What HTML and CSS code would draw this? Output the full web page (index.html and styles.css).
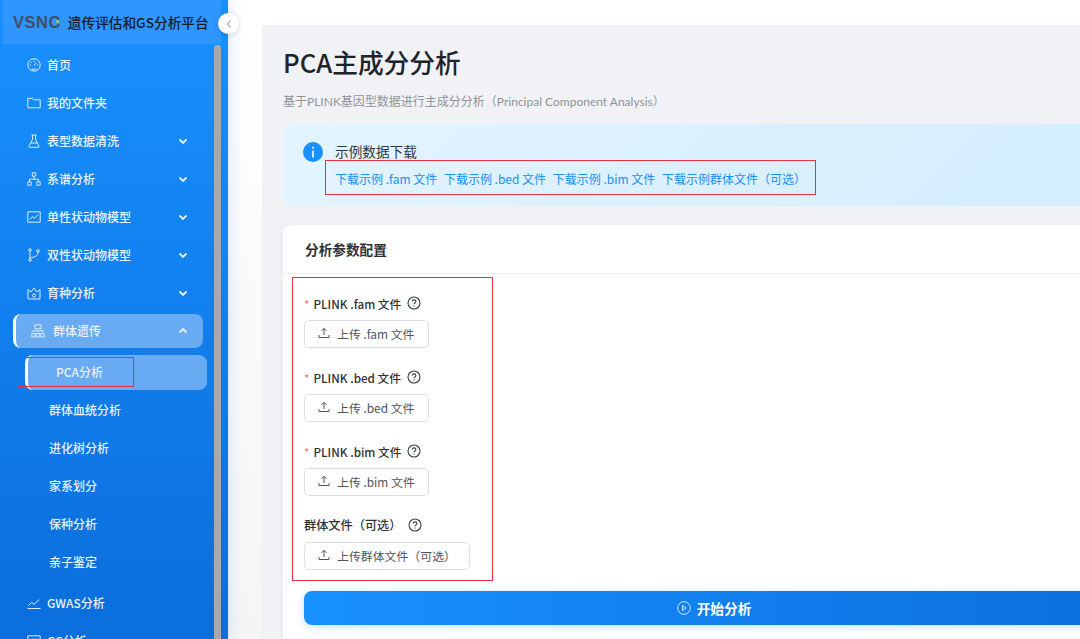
FILE: index.html
```html
<!DOCTYPE html>
<html lang="zh-CN">
<head>
<meta charset="utf-8">
<title>PCA主成分分析</title>
<link rel="stylesheet" href="styles.css">
</head>
<body>
<div class="app">
  <aside class="sidebar">
    <div class="brand"><span class="logo">VSNC</span><span class="brand-name">遗传评估和GS分析平台</span></div>
    <button class="collapse"><svg width="8" height="10" viewBox="0 0 8 10"><path d="M5.500 1.500 2.500 5l3 3.500" fill="none" stroke="#b4b8bf" stroke-width="1.400"/></svg></button>
    <div class="side-body">
      <nav class="menu">
        <a class="item"><svg class="ico" viewBox="0 0 14 14"><circle cx="7" cy="7" r="6.200"/><path d="M7 7.500 9.500 4.500M2.800 7h1.200M10 7h1.200M7 2.800V4M4 4l.8.8M4.500 11.200h5"/></svg><span>首页</span></a>
        <a class="item"><svg class="ico" viewBox="0 0 14 14"><path d="M.8 2.300h4.700l1.200 1.500h6.500v8H.8z"/></svg><span>我的文件夹</span></a>
        <a class="item"><svg class="ico" viewBox="0 0 14 14"><path d="M4.500 1h5M5.500 1v4.500L1.800 12.500c-.2.400 0 .8.500.8h9.400c.5 0 .7-.4.500-.8L8.500 5.500V1M3.500 9h7"/></svg><span>表型数据清洗</span><svg class="chev" viewBox="0 0 10 10"><path d="M1.500 3.500 5 7l3.500-3.500"/></svg></a>
        <a class="item"><svg class="ico" viewBox="0 0 14 14"><path d="M5.300.8h3.400v3.400H5.300zM.8 9.800h3.400v3.400H.8zM9.800 9.800h3.400v3.400H9.800zM7 4.200v3M2.500 9.800V7.200h9v2.600"/></svg><span>系谱分析</span><svg class="chev" viewBox="0 0 10 10"><path d="M1.500 3.500 5 7l3.500-3.500"/></svg></a>
        <a class="item"><svg class="ico" viewBox="0 0 14 14"><path d="M.8 1.800h12.400v10.400H.8zM3 9.500l2.500-2.800 2 1.500L11 4.800"/></svg><span>单性状动物模型</span><svg class="chev" viewBox="0 0 10 10"><path d="M1.500 3.500 5 7l3.500-3.500"/></svg></a>
        <a class="item"><svg class="ico" viewBox="0 0 14 14"><circle cx="3" cy="2" r="1.300"/><circle cx="3" cy="12" r="1.300"/><circle cx="11" cy="3" r="1.300"/><path d="M3 3.300v7.400M3 9.500c5 0 8-1.500 8-5.200"/></svg><span>双性状动物模型</span><svg class="chev" viewBox="0 0 10 10"><path d="M1.500 3.500 5 7l3.500-3.500"/></svg></a>
        <a class="item"><svg class="ico" viewBox="0 0 14 14"><path d="M1 3.500 4 6l3-4 3 4 3-2.500V13H1zM5.500 9.500a1.500 1.500 0 1 0 3 0 1.500 1.500 0 1 0-3 0"/></svg><span>育种分析</span><svg class="chev" viewBox="0 0 10 10"><path d="M1.500 3.500 5 7l3.500-3.500"/></svg></a>
        <a class="item group"><svg class="ico" viewBox="0 0 14 14"><path d="M3.800.8h6.400v4H3.800zM.8 9.500h3.400v3.500H.8zM5.300 9.500h3.400v3.500H5.300zM9.800 9.500h3.400v3.500H9.800zM.8 7h12.400"/></svg><span>群体遗传</span><svg class="chev" viewBox="0 0 10 10"><path d="M1.500 6.500 5 3l3.500 3.500"/></svg></a>
        <a class="sub active">PCA分析</a>
        <a class="sub">群体血统分析</a>
        <a class="sub">进化树分析</a>
        <a class="sub">家系划分</a>
        <a class="sub">保种分析</a>
        <a class="sub">亲子鉴定</a>
        <a class="item after-sub"><svg class="ico" viewBox="0 0 14 14"><path d="M.5 12.500h13M1 9.800l3.800-3.300 2.400 1.800 5-4.800"/></svg><span>GWAS分析</span></a>
        <a class="item"><svg class="ico" viewBox="0 0 14 14"><path d="M.8 1.800h12.400v10.400H.8zM3 4.500v2M5.500 4.500v2M8 4.500v2M10.500 4.500v2"/></svg><span>GS分析</span><svg class="chev" viewBox="0 0 10 10"><path d="M1.500 3.500 5 7l3.500-3.500"/></svg></a>
      </nav>
      <div class="thumb"></div>
    </div>
  </aside>
  <main class="main">
    <section class="panel">
      <h1 class="title">PCA主成分分析</h1>
      <p class="subtitle">基于PLINK基因型数据进行主成分分析（Principal Component Analysis）</p>
      <div class="alert">
        <svg class="info" viewBox="0 0 20 20"><circle cx="10" cy="10" r="10" fill="#1890ff"/><rect x="9.200" y="8.500" width="1.600" height="7" fill="#fff"/><rect x="9.200" y="4.800" width="1.600" height="1.800" fill="#fff"/></svg>
        <div class="alert-body">
          <div class="alert-title">示例数据下载</div>
          <div class="links"><a>下载示例 .fam 文件</a><a>下载示例 .bed 文件</a><a>下载示例 .bim 文件</a><a>下载示例群体文件（可选）</a></div>
        </div>
      </div>
      <div class="card">
        <div class="card-head">分析参数配置</div>
        <div class="card-body">
          <div class="field">
            <div class="label"><i>*</i>PLINK .fam 文件<svg class="help" viewBox="0 0 14 14"><circle cx="7" cy="7" r="6"/><path d="M5.200 5.600c0-2.300 3.700-2.300 3.700 0 0 1.400-1.900 1.400-1.900 2.700M7 9.600v1"/></svg></div>
            <button class="upload"><svg class="up" viewBox="0 0 12 12"><path d="M6 8V1.500M3.500 3.800 6 1.300l2.500 2.500M1 8v2.500h10V8"/></svg>上传 .fam 文件</button>
          </div>
          <div class="field">
            <div class="label"><i>*</i>PLINK .bed 文件<svg class="help" viewBox="0 0 14 14"><circle cx="7" cy="7" r="6"/><path d="M5.200 5.600c0-2.300 3.700-2.300 3.700 0 0 1.400-1.900 1.400-1.900 2.700M7 9.600v1"/></svg></div>
            <button class="upload"><svg class="up" viewBox="0 0 12 12"><path d="M6 8V1.500M3.500 3.800 6 1.300l2.500 2.500M1 8v2.500h10V8"/></svg>上传 .bed 文件</button>
          </div>
          <div class="field">
            <div class="label"><i>*</i>PLINK .bim 文件<svg class="help" viewBox="0 0 14 14"><circle cx="7" cy="7" r="6"/><path d="M5.200 5.600c0-2.300 3.700-2.300 3.700 0 0 1.400-1.900 1.400-1.900 2.700M7 9.600v1"/></svg></div>
            <button class="upload"><svg class="up" viewBox="0 0 12 12"><path d="M6 8V1.500M3.500 3.800 6 1.300l2.500 2.500M1 8v2.500h10V8"/></svg>上传 .bim 文件</button>
          </div>
          <div class="field">
            <div class="label plain">群体文件（可选）<svg class="help" viewBox="0 0 14 14"><circle cx="7" cy="7" r="6"/><path d="M5.200 5.600c0-2.300 3.700-2.300 3.700 0 0 1.400-1.900 1.400-1.900 2.700M7 9.600v1"/></svg></div>
            <button class="upload"><svg class="up" viewBox="0 0 12 12"><path d="M6 8V1.500M3.500 3.800 6 1.300l2.500 2.500M1 8v2.500h10V8"/></svg>上传群体文件（可选）</button>
          </div>
          <button class="start"><svg class="play" viewBox="0 0 14 14"><circle cx="7" cy="7" r="6.300"/><path d="M5.600 4.600 9.200 7l-3.600 2.400z"/></svg>开始分析</button>
        </div>
      </div>
    </section>
  </main>
</div>
<div class="mark mark-menu"></div>
<div class="mark mark-links"></div>
<div class="mark mark-form"></div>
</body>
</html>
```
FILE: styles.css
```css
* { box-sizing: border-box; }
html, body { margin: 0; height: 100%; overflow: hidden; }
body { font-family: "Noto Sans CJK SC", "Noto Sans", sans-serif; background: #fff; color: #303133; }
a { display: block; }
button { font-family: inherit; }

.app { display: flex; height: 639px; width: 1080px; overflow: hidden; }

.sidebar { position: relative; z-index: 2; flex: 0 0 228px; height: 100%; padding-left: 3px; padding-right: 7px; display: flex; flex-direction: column; background: linear-gradient(180deg, #1890ff 0%, #0a6edb 100%); box-shadow: 3px 0 12px rgba(24,120,230,.14); }
.brand { flex: 0 0 44px; display: flex; align-items: center; gap: 7px; padding-left: 10px; background: #2f95ff; white-space: nowrap; }
.logo { position: relative; font-family: "Liberation Sans", sans-serif; font-weight: 700; font-size: 16.500px; color: #3f4f66; letter-spacing: .5px; }
.logo::after { content: ""; position: absolute; right: 2px; top: 7px; width: 3px; height: 3px; border-radius: 50%; background: #b5d334; }
.brand-name { font-size: 13.670px; font-weight: 500; color: #14202e; }
.collapse { position: absolute; left: 218px; top: 13px; width: 21px; height: 21px; padding: 0; border: 0; border-radius: 50%; background: #fff; box-shadow: 0 1px 5px rgba(0,0,0,.15); display: flex; align-items: center; justify-content: center; }

.side-body { flex: 1; min-height: 0; display: flex; }
.menu { flex: 1; min-width: 0; padding-top: 2px; overflow: hidden; }
.thumb { flex: 0 0 7px; margin-top: 1px; border-radius: 3px 3px 0 0; background: #a9a9a9; }

.item { position: relative; height: 38px; display: flex; align-items: center; padding: 0 0 1px 24px; font-size: 12px; font-weight: 500; color: #eaf4ff; }
.ico { width: 14px; height: 14px; margin-right: 6px; flex: none; fill: none; stroke: #dcecff; stroke-width: 1; }
.chev { position: absolute; left: 175px; top: 14px; width: 10px; height: 10px; fill: none; stroke: #e6f2ff; stroke-width: 1.800; }
.after-sub { margin-top: 3px; }

.group { width: 190px; height: 34px; margin: 2px 0 0 10px; padding-left: 15px; border-radius: 8px; border-left: 3px solid #fff; background: #68abf2; }
.group .ico { margin-right: 8px; }
.group .chev { left: 162px; top: 12px; }

.sub { height: 38px; line-height: 38px; padding-left: 46px; font-size: 12px; font-weight: 500; color: #e6f2ff; }
.sub.active { width: 182px; height: 35px; line-height: 34px; margin: 7px 0 1px 22px; padding-left: 28px; border-radius: 8px; border-left: 3px solid #fff; background: #68abf2; }

.main { flex: 1; min-width: 0; padding: 25px 0 0 34px; background: linear-gradient(180deg, #fff 0%, #f5f5f5 100%); }
.panel { height: 100%; padding: 18px 0 0 21px; background: #f0f2f5; }
.title { margin: 0; font-size: 25.700px; line-height: 38px; font-weight: 500; color: #1f2329; white-space: nowrap; }
.subtitle { margin: 12px 0 0; font-family: "Lato", "Noto Sans CJK SC", sans-serif; font-size: 12px; line-height: 18px; color: #909399; white-space: nowrap; }

.alert { display: flex; height: 82px; margin-top: 13px; padding: 18px 0 0 20px; border-radius: 8px 0 0 8px; background: linear-gradient(135deg, #e3f4ff 0%, #d3edfe 100%); }
.info { width: 20px; height: 20px; flex: none; }
.alert-body { margin-left: 12px; margin-top: -1px; }
.alert-title { font-size: 13.670px; line-height: 20px; color: #33383f; }
.links { display: flex; gap: 6.700px; margin-top: 9px; font-size: 12px; line-height: 18px; color: #1890ff; white-space: nowrap; }

.card { margin-top: 19px; height: 500px; border-radius: 8px 0 0 0; background: #fff; box-shadow: 0 1px 6px rgba(0,0,0,.05); }
.card-head { height: 49px; padding-left: 22px; line-height: 49px; font-size: 13.670px; font-weight: 700; color: #303133; border-bottom: 1px solid #eef0f3; }
.card-body { padding: 19px 0 0 21px; }
.field { height: 74px; }
.label { display: flex; align-items: center; height: 20px; font-size: 11.700px; font-weight: 500; color: #303133; white-space: nowrap; }
.label i { font-style: normal; color: #f56c6c; margin-right: 4px; font-weight: 400; }
.label.plain { font-size: 12.200px; }
.help { width: 14px; height: 14px; margin-left: 6px; fill: none; stroke: #3c3f44; stroke-width: 1.100; }
.upload { display: flex; align-items: center; height: 28px; margin-top: 7px; padding: 0 13px 2px; border: 1px solid #dcdfe6; border-radius: 5px; background: #fff; font-size: 11.900px; color: #50545b; white-space: nowrap; }
.up { width: 12px; height: 12px; margin-right: 7px; fill: none; stroke: #50545b; stroke-width: 1; }
.start { display: flex; align-items: center; justify-content: center; width: 820px; height: 34px; margin-top: 2px; padding: 0; border: 0; border-radius: 8px 0 0 8px; background: linear-gradient(90deg, #1890ff 0%, #0b6fdd 100%); box-shadow: 0 2px 8px rgba(24,144,255,.25); color: #fff; font-size: 13.670px; font-weight: 700; }
.play { width: 14px; height: 14px; margin-right: 6px; fill: none; stroke: #dcecff; stroke-width: 1; }

.mark { position: absolute; z-index: 3; border: 1px solid #e8303f; pointer-events: none; }
.mark-menu { left: 17px; top: 357px; width: 117px; height: 30px; }
.mark-links { left: 325px; top: 160px; width: 491px; height: 35px; }
.mark-form { left: 292px; top: 277px; width: 201px; height: 304px; }
```
